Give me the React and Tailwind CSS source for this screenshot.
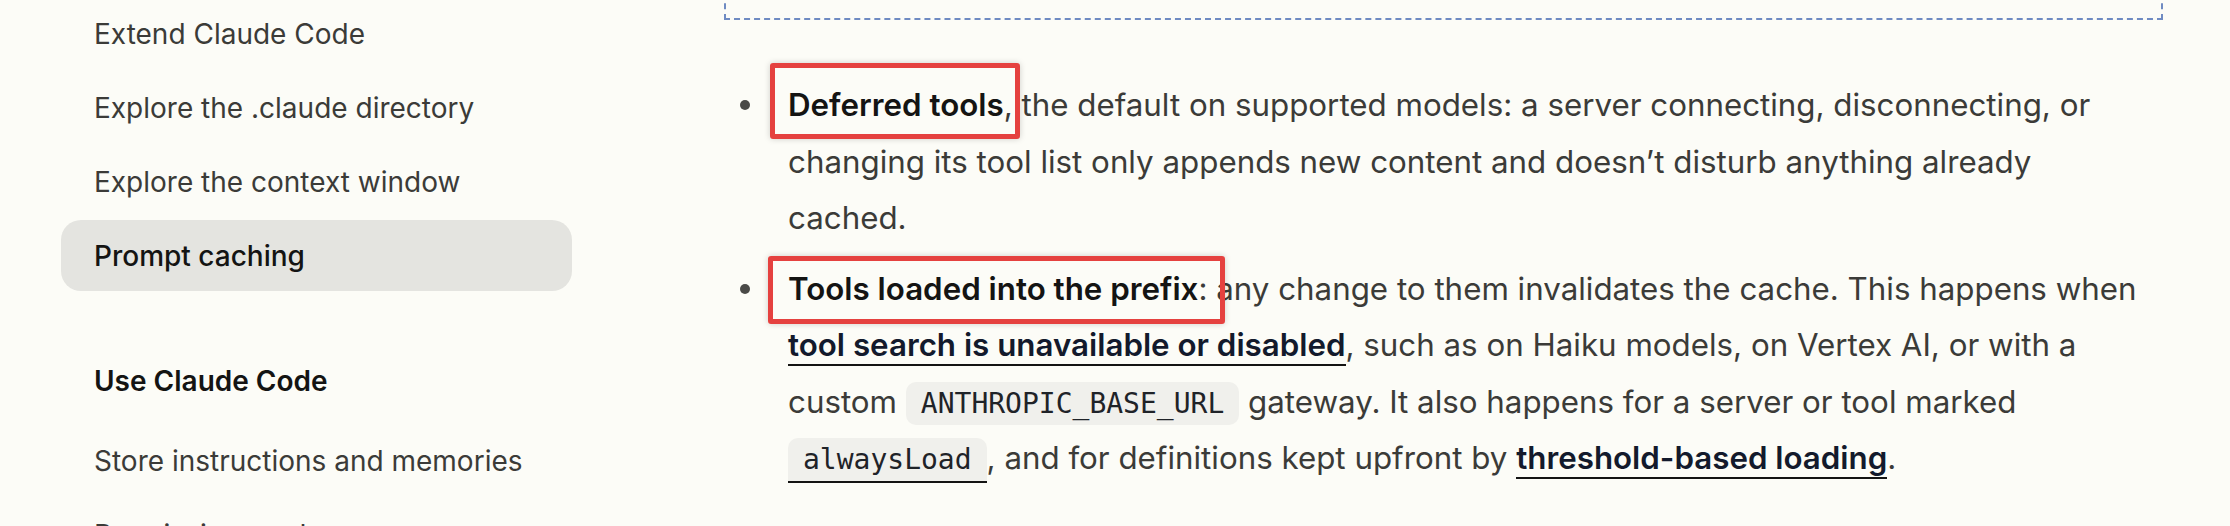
import React from 'react';

const navTop = ['Extend Claude Code', 'Explore the .claude directory', 'Explore the context window'];
const navUse = ['Store instructions and memories', 'Permission modes'];

const Mark = ({ className }) => (
  <span
    className={`pointer-events-none absolute rounded-[3px] border-[5px] border-[#e5413f] shadow-[0_0_6px_rgba(0,0,0,0.18)] ${className}`}
  />
);

const Code = ({ children, className = '' }) => (
  <code
    className={`bg-[#f0f0ec] px-[15px] py-[5px] font-['DejaVu_Sans_Mono',monospace] text-[28px] leading-none text-[#1f2328] ${className}`}
  >
    {children}
  </code>
);

const Bullet = ({ children }) => (
  <li className="flex">
    <div className="flex h-[56.5px] w-[64px] shrink-0 items-center pl-[16px]">
      <span className="h-[10px] w-[10px] rounded-full bg-[#4a4a47]" />
    </div>
    <div className="flex-1 text-[31.3px] leading-[56.5px] text-[#3b3b38]">{children}</div>
  </li>
);

export default function App() {
  return (
    <div className="flex h-[526px] w-[2230px] overflow-hidden bg-[#fcfcf7] font-['Inter',sans-serif]">
      <aside className="-mt-[2px] w-[724px] shrink-0 pl-[61px]">
        <div className="flex flex-col gap-[3px]">
          {navTop.map((item) => (
            <div key={item} className="flex h-[71px] w-[511px] items-center px-[33px] text-[28px] text-[#3b3b38]">
              {item}
            </div>
          ))}
          <div className="flex h-[71px] w-[511px] items-center rounded-[20px] bg-[#e4e4e0] px-[33px] text-[28px] font-medium text-[#141413]">
            Prompt caching
          </div>
        </div>

        <div className="mt-[54px] flex h-[71px] items-center px-[33px] text-[28px] font-semibold text-[#141413]">
          Use Claude Code
        </div>
        <div className="mt-[9px] flex flex-col gap-[3px]">
          {navUse.map((item) => (
            <div key={item} className="flex h-[71px] w-[511px] items-center px-[33px] text-[28px] text-[#3b3b38]">
              {item}
            </div>
          ))}
        </div>
      </aside>

      <main className="w-[1439px] shrink-0">
        <div className="-mt-[40px] h-[60px] border-2 border-t-0 border-dashed border-[#6f8bc2]" />

        <ul className="mt-[57px] flex flex-col gap-[14px] pr-[13px]">
          <Bullet>
            <span className="relative font-semibold text-[#141413]">
              Deferred tools
              <Mark className="-top-[23px] -bottom-[15px] -left-[18px] -right-[16px]" />
            </span>
            , the default on supported models: a server connecting, disconnecting, or changing its tool list only
            appends new content and doesn’t disturb anything already cached.
          </Bullet>
          <Bullet>
            <span className="relative font-semibold text-[#141413]">
              Tools loaded into the prefix
              <Mark className="-top-[14px] -bottom-[16px] -left-[20px] -right-[27px]" />
            </span>
            : any change to them invalidates the cache. This happens when{' '}
            <a className="border-b-2 border-[#141413] font-semibold text-[#131a2c]">tool search is unavailable or disabled</a>
            , such as on Haiku models, on Vertex AI, or with a custom <Code className="rounded-[10px]">ANTHROPIC_BASE_URL</Code>{' '}
            gateway. It also happens for a server or tool marked{' '}
            <a>
              <Code className="rounded-t-[10px] border-b-2 border-[#141413]">alwaysLoad</Code>
            </a>
            , and for definitions kept upfront by{' '}
            <a className="border-b-2 border-[#141413] font-semibold text-[#131a2c]">threshold-based loading</a>.
          </Bullet>
        </ul>
      </main>
    </div>
  );
}
